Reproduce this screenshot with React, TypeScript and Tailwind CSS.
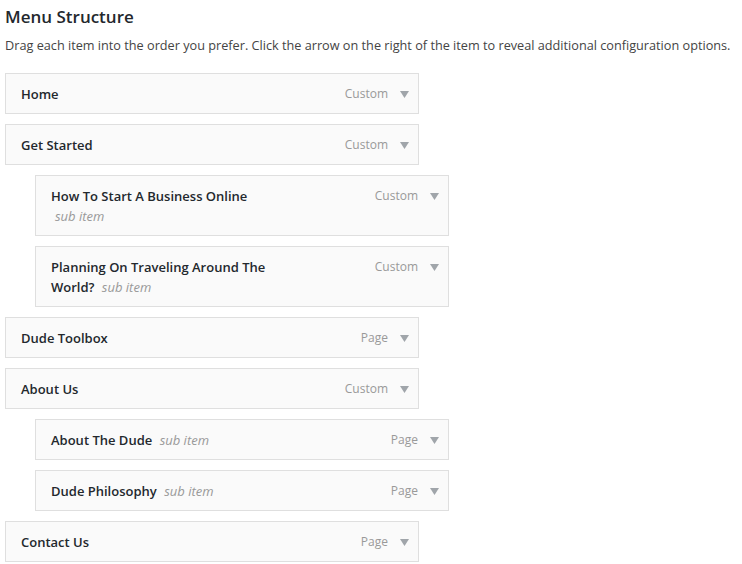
type Item = {
  title: string;
  type: string;
  sub?: boolean;
};

const items: Item[] = [
  { title: 'Home', type: 'Custom' },
  { title: 'Get Started', type: 'Custom' },
  { title: 'How To Start A Business Online', type: 'Custom', sub: true },
  { title: 'Planning On Traveling Around The World?', type: 'Custom', sub: true },
  { title: 'Dude Toolbox', type: 'Page' },
  { title: 'About Us', type: 'Custom' },
  { title: 'About The Dude', type: 'Page', sub: true },
  { title: 'Dude Philosophy', type: 'Page', sub: true },
  { title: 'Contact Us', type: 'Page' },
];

function Arrow() {
  return (
    <svg width="9" height="7" viewBox="0 0 9 7" className="mt-[7px]">
      <path d="M0 0 L9 0 L4.5 7 Z" fill="#a0a5aa" />
    </svg>
  );
}

function MenuItem({ item }: { item: Item }) {
  return (
    <div
      className={`flex w-[414px] items-start border border-[#dfdfdf] bg-[#fafafa] pt-[10px] pb-[9px] pl-[15px] pr-[9px] leading-[20px] ${
        item.sub ? 'ml-[30px]' : ''
      }`}
    >
      <div className="w-[224px] text-[13px] leading-[20px] text-[#23282d]">
        <span className="font-semibold">{item.title}</span>{' '}
        {item.sub && (
          <span className="ml-[4px] italic text-[#999]">sub item</span>
        )}
      </div>
      <div className="ml-auto flex items-start gap-[12px] text-[12px] leading-[20px] text-[#999]">
        <span>{item.type}</span>
        <Arrow />
      </div>
    </div>
  );
}

export default function App() {
  return (
    <div className="min-h-screen bg-white px-[5px] pt-[6px] font-['Open_Sans',sans-serif]">
      <h3 className="text-[17px] font-semibold leading-[22px] text-[#23282d]">
        Menu Structure
      </h3>
      <p className="mt-[6px] whitespace-nowrap text-[12.7px] leading-[22px] text-[#444]">
        Drag each item into the order you prefer. Click the arrow on the right
        of the item to reveal additional configuration options.
      </p>
      <div className="mt-[17px] flex flex-col gap-[10px]">
        {items.map((item) => (
          <MenuItem key={item.title} item={item} />
        ))}
      </div>
    </div>
  );
}
